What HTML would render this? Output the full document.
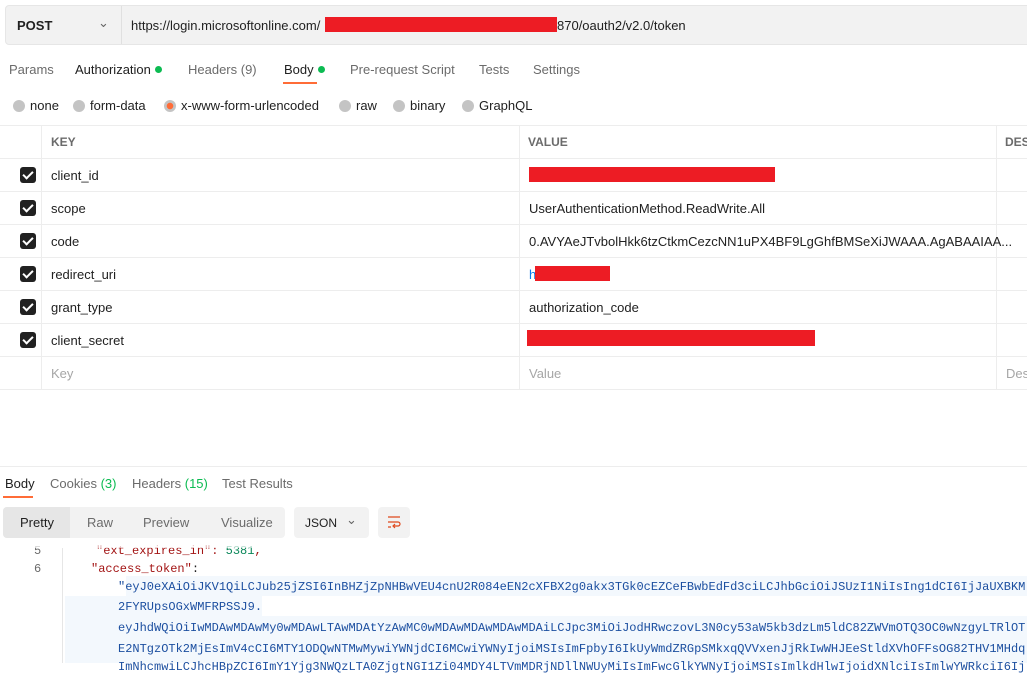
<!DOCTYPE html><html><head><style>
body{margin:0;width:1027px;height:663px;overflow:hidden;background:#fff;font-family:"Liberation Sans",sans-serif;font-size:13px;color:#212121;position:relative}
.a{position:absolute;white-space:nowrap}
.red{position:absolute;background:#ed1c24}
.hl{position:absolute;left:0;right:0;height:1px;background:#ededed}
.vl{position:absolute;width:1px;background:#ededed}
.cb{position:absolute;left:20px;width:16px;height:16px;background:#212121;border-radius:3px}
.cb:after{content:"";position:absolute;left:5px;top:2px;width:4px;height:8px;border:solid #fff;border-width:0 2px 2px 0;transform:rotate(45deg)}
.rd{display:inline-block;width:12px;height:12px;border-radius:50%;background:#c4c4c4;vertical-align:-2px;margin-right:5px}
.g{display:inline-block;width:7px;height:7px;border-radius:50%;background:#0cbb52;margin-left:4px;vertical-align:1px}
.mono{font-family:"Liberation Mono",monospace;font-size:12px}
.tk{color:#1c4fa0}
</style></head><body>
<div class="a" style="left:5px;top:5px;width:1030px;height:38px;background:#f2f2f2;border:1px solid #e6e6e6;border-radius:4px"></div>
<div class="a" style="left:121px;top:6px;width:1px;height:38px;background:#e0e0e0"></div>
<div class="a" style="left:17px;top:18px;font-weight:bold;font-size:13px">POST</div>
<div class="a" style="left:98px;top:15px;color:#666">⌄</div>
<div class="a" style="left:131px;top:18px">https://login.microsoftonline.com/</div>
<div class="red" style="left:325px;top:17px;width:232px;height:15px"></div>
<div class="a" style="left:557px;top:18px">870/oauth2/v2.0/token</div>
<div class="a" style="left:9px;top:62px;color:#6b6b6b">Params</div>
<div class="a" style="left:75px;top:62px">Authorization<span class="g"></span></div>
<div class="a" style="left:188px;top:62px;color:#6b6b6b">Headers (9)</div>
<div class="a" style="left:284px;top:62px">Body<span class="g"></span></div>
<div class="a" style="left:283px;top:82px;width:34px;height:2px;background:#ff6c37"></div>
<div class="a" style="left:350px;top:62px;color:#6b6b6b">Pre-request Script</div>
<div class="a" style="left:479px;top:62px;color:#6b6b6b">Tests</div>
<div class="a" style="left:533px;top:62px;color:#6b6b6b">Settings</div>
<div class="a" style="left:13px;top:98px"><span class="rd"></span>none</div>
<div class="a" style="left:73px;top:98px"><span class="rd"></span>form-data</div>
<div class="a" style="left:164px;top:98px"><span class="rd" style="background:radial-gradient(#ff6c37 3px,#c4c4c4 3.5px)"></span>x-www-form-urlencoded</div>
<div class="a" style="left:339px;top:98px"><span class="rd"></span>raw</div>
<div class="a" style="left:393px;top:98px"><span class="rd"></span>binary</div>
<div class="a" style="left:462px;top:98px"><span class="rd"></span>GraphQL</div>
<div class="hl" style="top:125px"></div><div class="hl" style="top:158px"></div><div class="hl" style="top:191px"></div><div class="hl" style="top:224px"></div><div class="hl" style="top:257px"></div><div class="hl" style="top:290px"></div><div class="hl" style="top:323px"></div><div class="hl" style="top:356px"></div><div class="hl" style="top:389px"></div>
<div class="vl" style="left:41px;top:125px;height:264px"></div><div class="vl" style="left:519px;top:125px;height:264px"></div><div class="vl" style="left:996px;top:125px;height:264px"></div>
<div class="a" style="left:51px;top:135px;font-weight:bold;font-size:12px;color:#6b6b6b">KEY</div>
<div class="a" style="left:528px;top:135px;font-weight:bold;font-size:12px;color:#6b6b6b">VALUE</div>
<div class="a" style="left:1005px;top:135px;font-weight:bold;font-size:12px;color:#6b6b6b">DES</div>
<div class="cb" style="top:167px"></div><div class="a" style="left:51px;top:168px">client_id</div><div class="red" style="left:529px;top:167px;width:246px;height:15px"></div>
<div class="cb" style="top:200px"></div><div class="a" style="left:51px;top:201px">scope</div><div class="a" style="left:529px;top:201px">UserAuthenticationMethod.ReadWrite.All</div>
<div class="cb" style="top:233px"></div><div class="a" style="left:51px;top:234px">code</div><div class="a" style="left:529px;top:234px">0.AVYAeJTvbolHkk6tzCtkmCezcNN1uPX4BF9LgGhfBMSeXiJWAAA.AgABAAIAA...</div>
<div class="cb" style="top:266px"></div><div class="a" style="left:51px;top:267px">redirect_uri</div><div class="a" style="left:529px;top:267px;color:#097bed">h</div><div class="red" style="left:535px;top:266px;width:75px;height:15px"></div>
<div class="cb" style="top:299px"></div><div class="a" style="left:51px;top:300px">grant_type</div><div class="a" style="left:529px;top:300px">authorization_code</div>
<div class="cb" style="top:332px"></div><div class="a" style="left:51px;top:333px">client_secret</div><div class="red" style="left:527px;top:330px;width:288px;height:16px"></div>
<div class="a" style="left:51px;top:366px;color:#a6a6a6">Key</div><div class="a" style="left:529px;top:366px;color:#a6a6a6">Value</div><div class="a" style="left:1006px;top:366px;color:#a6a6a6">Des</div>
<div class="hl" style="top:466px"></div>
<div class="a" style="left:5px;top:476px">Body</div>
<div class="a" style="left:3px;top:496px;width:30px;height:2px;background:#ff6c37"></div>
<div class="a" style="left:50px;top:476px;color:#6b6b6b">Cookies <span style="color:#0cbb52">(3)</span></div>
<div class="a" style="left:132px;top:476px;color:#6b6b6b">Headers <span style="color:#0cbb52">(15)</span></div>
<div class="a" style="left:222px;top:476px;color:#6b6b6b">Test Results</div>
<div class="a" style="left:3px;top:507px;width:282px;height:31px;background:#f2f2f2;border-radius:4px"></div>
<div class="a" style="left:3px;top:507px;width:67px;height:31px;background:#e6e6e6;border-radius:4px 0 0 4px"></div>
<div class="a" style="left:20px;top:515px">Pretty</div>
<div class="a" style="left:87px;top:515px;color:#6b6b6b">Raw</div>
<div class="a" style="left:143px;top:515px;color:#6b6b6b">Preview</div>
<div class="a" style="left:221px;top:515px;color:#6b6b6b">Visualize</div>
<div class="a" style="left:294px;top:507px;width:75px;height:31px;background:#f2f2f2;border-radius:4px"></div>
<div class="a" style="left:305px;top:516px;font-size:12px">JSON</div><div class="a" style="left:346px;top:512px;color:#666">⌄</div>
<div class="a" style="left:378px;top:507px;width:32px;height:31px;background:#f2f2f2;border-radius:4px"></div>
<svg class="a" style="left:386px;top:514px" width="16" height="16"><path d="M2 3h12M2 8h10a2 2 0 0 1 0 4H8M2 13h3M9 10l-2 2 2 2" stroke="#e0481c" fill="none" stroke-width="1.2"/></svg>
<div class="a" style="left:65px;top:616px;width:962px;height:47px;background:#f3f8fd"></div>
<div class="a" style="left:65px;top:596px;width:197px;height:20px;background:#f3f8fd"></div>
<div class="a" style="left:126px;top:576px;width:901px;height:20px;background:#f3f8fd"></div>
<div class="a" style="left:62px;top:548px;width:1px;height:115px;background:#e6e6e6"></div>
<div class="a mono" style="left:34px;top:544px;color:#6b6b6b">5</div>
<div class="a mono" style="left:34px;top:562px;color:#6b6b6b">6</div>
<div class="a mono" style="left:96px;top:544px;color:#a31515">"ext_expires_in": <span style="color:#098658">5381</span>,</div>
<div class="a" style="left:0;top:538px;width:1027px;height:10px;background:linear-gradient(#fff 40%,rgba(255,255,255,0.6))"></div>
<div class="a mono" style="left:91px;top:562px;color:#a31515">"access_token"<span style="color:#212121">:</span></div>
<div class="a mono tk" style="left:118px;top:580px">"eyJ0eXAiOiJKV1QiLCJub25jZSI6InBHZjZpNHBwVEU4cnU2R084eEN2cXFBX2g0akx3TGk0cEZCeFBwbEdFd3ciLCJhbGciOiJSUzI1NiIsIng1dCI6IjJaUXBKM</div>
<div class="a mono tk" style="left:118px;top:600px">2FYRUpsOGxWMFRPSSJ9.</div>
<div class="a mono tk" style="left:118px;top:621px">eyJhdWQiOiIwMDAwMDAwMy0wMDAwLTAwMDAtYzAwMC0wMDAwMDAwMDAwMDAiLCJpc3MiOiJodHRwczovL3N0cy53aW5kb3dzLm5ldC82ZWVmOTQ3OC0wNzgyLTRlOT</div>
<div class="a mono tk" style="left:118px;top:642px">E2NTgzOTk2MjEsImV4cCI6MTY1ODQwNTMwMywiYWNjdCI6MCwiYWNyIjoiMSIsImFpbyI6IkUyWmdZRGpSMkxqQVVxenJjRkIwWHJEeStldXVhOFFsOG82THV1MHdq</div>
<div class="a mono tk" style="left:118px;top:660px">ImNhcmwiLCJhcHBpZCI6ImY1Yjg3NWQzLTA0ZjgtNGI1Zi04MDY4LTVmMDRjNDllNWUyMiIsImFwcGlkYWNyIjoiMSIsImlkdHlwIjoidXNlciIsImlwYWRkciI6Ij</div>
</body></html>
